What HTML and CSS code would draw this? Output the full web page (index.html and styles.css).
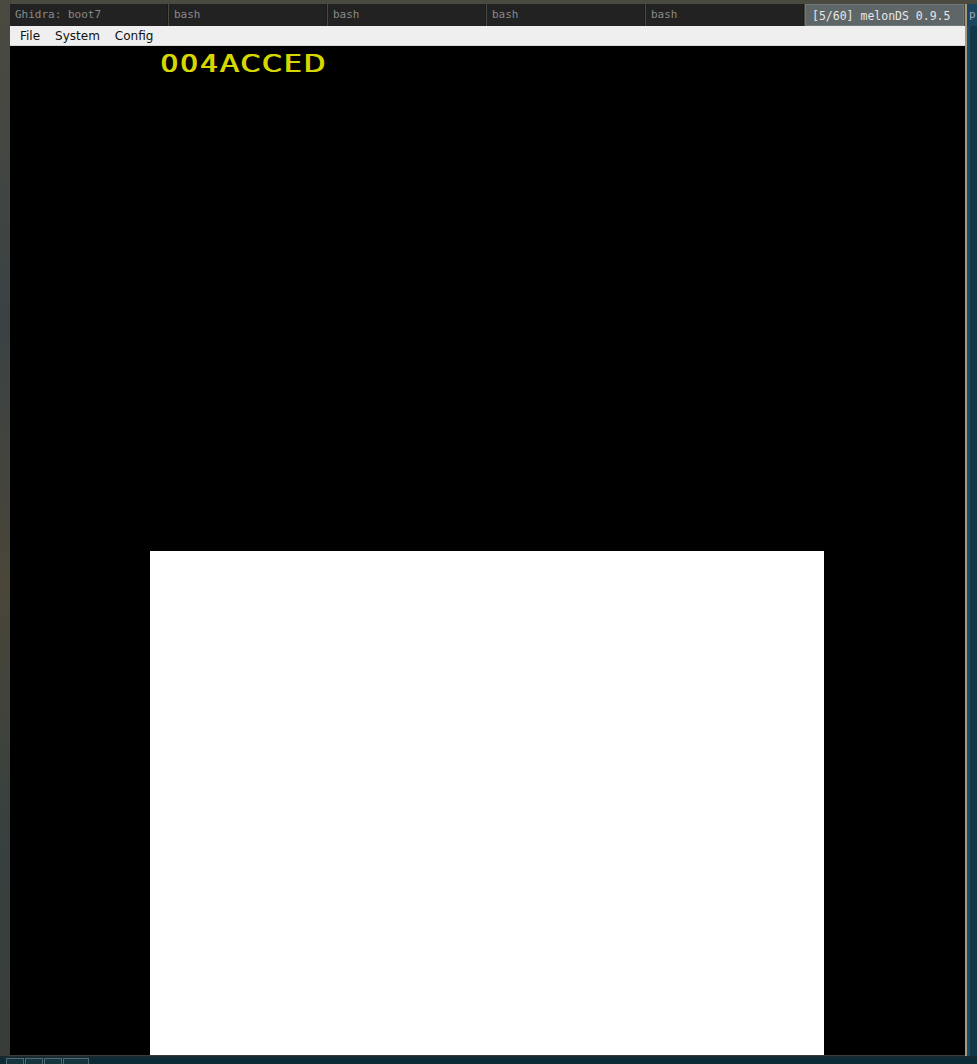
FILE: index.html
```html
<!DOCTYPE html>
<html>
<head>
<meta charset="utf-8">
<link rel="stylesheet" href="styles.css">
</head>
<body>
<div class="desktop">
  <div class="tabbar">
    <div class="tab">Ghidra: boot7</div>
    <div class="tab">bash</div>
    <div class="tab">bash</div>
    <div class="tab">bash</div>
    <div class="tab">bash</div>
    <div class="tab active">[5/60] melonDS 0.9.5</div>
  </div>
  <div class="window">
    <div class="menubar">
      <span class="menu">File</span>
      <span class="menu">System</span>
      <span class="menu">Config</span>
    </div>
    <div class="screen-area">
      <div class="ds">
        <div class="top-screen"><span class="code">004ACCED</span></div>
        <div class="bottom-screen"></div>
      </div>
    </div>
  </div>
  <div class="side-window"><div class="side-tab">p</div></div>
  <div class="taskbar">
    <span class="tb-btn"></span><span class="tb-btn"></span><span class="tb-btn"></span><span class="tb-btn wide"></span>
  </div>
</div>
</body>
</html>
```
FILE: styles.css
```css
html, body {
  margin: 0;
  padding: 0;
  background: #3d4038;
}
.desktop {
  position: relative;
  width: 977px;
  height: 1064px;
  overflow: hidden;
  background: linear-gradient(180deg, #4b4a40 0%, #3b4244 30%, #4a4639 55%, #36403f 80%, #3a3d39 100%);
}
.tabbar {
  display: flex;
  margin-left: 10px;
  padding-top: 4px;
  height: 22px;
  width: 955px;
  gap: 1px;
}
.tab {
  width: 158px;
  height: 22px;
  background: #222222;
  color: #8a8a8a;
  font-family: "DejaVu Sans Mono", monospace;
  font-size: 11px;
  line-height: 22px;
  padding-left: 5px;
  box-sizing: border-box;
  white-space: nowrap;
  border-right: 1px solid #1a1a1a;
}
.tab.active {
  width: 159px;
  background: #5e6668;
  color: #e6e6e6;
  font-size: 11.5px;
  padding-left: 6px;
  border: 1px solid #6e7678;
}
.window {
  margin-left: 10px;
  width: 955px;
}
.menubar {
  height: 20px;
  background: #efefef;
  display: flex;
  align-items: center;
  padding-left: 10px;
  gap: 15px;
  font-family: "DejaVu Sans", sans-serif;
  font-size: 12px;
  color: #111;
  border-bottom: 1px solid #d8d8d8;
  box-sizing: border-box;
}
.screen-area {
  background: #000;
  height: 1009px;
  padding-left: 140px;
  box-sizing: border-box;
}
.ds {
  width: 674px;
  display: flex;
  flex-direction: column;
}
.top-screen {
  height: 505px;
  background: #000;
  padding: 6px 0 0 10px;
  box-sizing: border-box;
}
.code {
  font-family: "DejaVu Sans", sans-serif;
  font-weight: normal;
  font-size: 24px;
  line-height: 24px;
  letter-spacing: 2px;
  color: #d6d600;
  display: inline-block;
  transform: scaleX(1.15);
  transform-origin: top left;
  text-shadow: 1.1px 0 0 #d6d600;
}
.bottom-screen {
  height: 504px;
  background: #fff;
}
.side-window {
  position: absolute;
  left: 965px;
  top: 4px;
  width: 12px;
  height: 1052px;
  border-left: 2px solid #a39a80;
  background: linear-gradient(90deg, #1f4a6a 0 3px, #103848 3px 100%);
  box-sizing: border-box;
}
.side-tab {
  height: 22px;
  background: #1a4460;
  color: #9ab;
  font-family: "DejaVu Sans Mono", monospace;
  font-size: 11px;
  line-height: 22px;
  padding-left: 2px;
}
.taskbar {
  position: absolute;
  left: 0;
  top: 1056px;
  width: 977px;
  height: 8px;
  background: #0b2c36;
  border-top: 2px solid #1b2a30;
  box-sizing: border-box;
  display: flex;
  padding-left: 6px;
  gap: 1px;
}
.tb-btn {
  width: 18px;
  height: 6px;
  border: 1px solid #4f6a74;
  border-bottom: none;
  background: #15353f;
  box-sizing: border-box;
}
.tb-btn.wide { width: 26px; }
```
